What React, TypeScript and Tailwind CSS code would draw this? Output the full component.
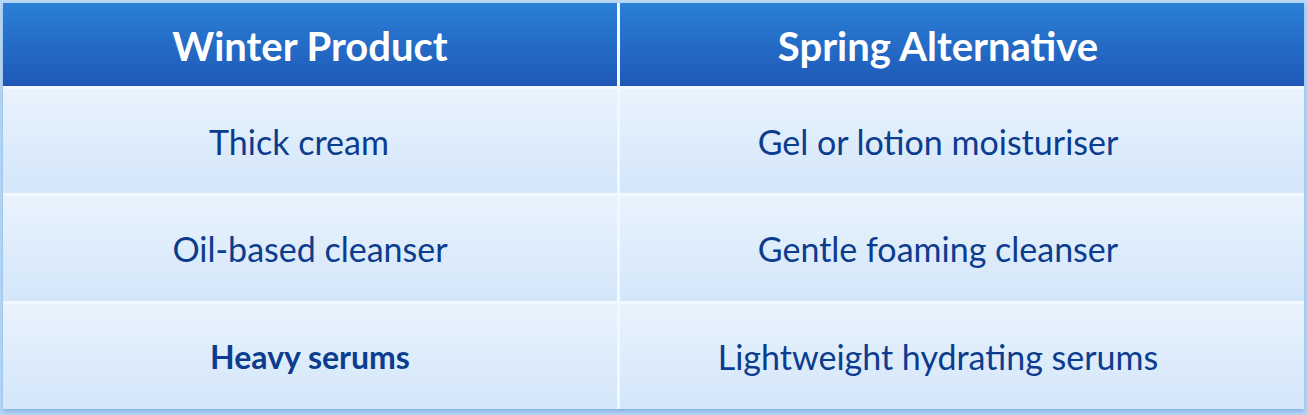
import React from "react";

const rows: { a: string; b: string; boldA?: boolean; padA?: string }[] = [
  { a: "Thick cream", b: "Gel or lotion moisturiser", padA: "pr-[22px]" },
  { a: "Oil-based cleanser", b: "Gentle foaming cleanser", padA: "" },
  { a: "Heavy serums", b: "Lightweight hydrating serums", boldA: true, padA: "" },
];

export default function App() {
  return (
    <div
      className="w-[1308px] h-[415px] bg-[#b8d7f5] pt-[3px] pl-[3px] pr-[4px] pb-[6px]"
      style={{ fontFamily: "Lato, 'Open Sans', sans-serif" }}
    >
      <div className="h-full bg-[#f2f8ff] grid grid-cols-[614px_1fr] grid-rows-[83px_104px_105px_105px] gap-x-[3px] gap-y-[3px] shadow-[0_3px_4px_rgba(80,140,210,0.45)]">
        <div className="bg-gradient-to-b from-[#2b80d6] to-[#1f58b7] flex items-center justify-center text-white font-bold text-[40px] pt-[2px]">
          Winter Product
        </div>
        <div className="bg-gradient-to-b from-[#2b80d6] to-[#1f58b7] flex items-center justify-center text-white font-bold text-[40px] pt-[2px] pr-[48px]">
          Spring Alternative
        </div>
        {rows.map((r) => (
          <React.Fragment key={r.a}>
            <div
              className={`bg-gradient-to-b from-[#e9f3fd] to-[#d3e6fa] flex items-center justify-center text-[#0c3c8e] ${r.boldA ? "font-bold text-[32px]" : "text-[34px]"} ${r.padA}`}
            >
              {r.a}
            </div>
            <div className="bg-gradient-to-b from-[#e9f3fd] to-[#d3e6fa] flex items-center justify-center text-[#0c3c8e] text-[34px] pr-[48px]">
              {r.b}
            </div>
          </React.Fragment>
        ))}
      </div>
    </div>
  );
}
